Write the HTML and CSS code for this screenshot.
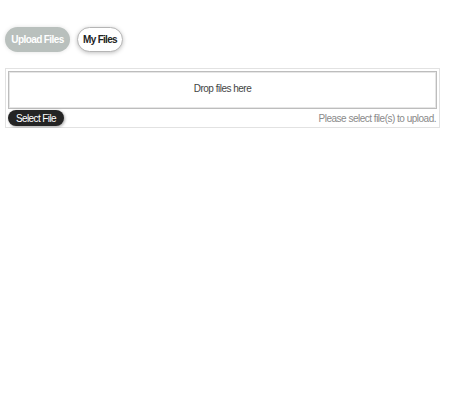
FILE: index.html
```html
<!DOCTYPE html>
<html>
<head>
<meta charset="utf-8">
<link rel="stylesheet" href="styles.css">
</head>
<body>
<div class="page">
  <div class="tabs">
    <button class="tab tab-active">Upload Files</button>
    <button class="tab tab-plain">My Files</button>
  </div>
  <div class="uploader">
    <div class="dropzone">Drop files here</div>
    <div class="footer">
      <button class="select-btn">Select File</button>
      <span class="status">Please select file(s) to upload.</span>
    </div>
  </div>
</div>
</body>
</html>
```
FILE: styles.css
```css
html, body {
  margin: 0;
  padding: 0;
  background: #ffffff;
  font-family: "Liberation Sans", Arial, sans-serif;
  font-variant-ligatures: none;
}
.page {
  padding: 27px 0 0 5px;
  width: 435px;
}
.tabs {
  display: flex;
  gap: 7px;
  height: 25px;
}
.tab {
  font-family: "Liberation Sans", Arial, sans-serif;
  font-variant-ligatures: none;
  font-size: 10px;
  font-weight: bold;
  letter-spacing: -0.6px;
  height: 25px;
  border-radius: 13px;
  padding: 0;
  margin: 0;
  box-sizing: border-box;
  cursor: pointer;
}
.tab-active {
  width: 65px;
  background: #b9c0bd;
  color: #ffffff;
  border: none;
  box-shadow: 0 0 4px rgba(0,0,0,0.12);
}
.tab-plain {
  width: 46px;
  background: #ffffff;
  color: #222222;
  letter-spacing: -0.7px;
  border: 1px solid #b5b5b5;
  box-shadow: 0 1px 4px rgba(0,0,0,0.25);
}
.uploader {
  margin-top: 16px;
  border: 1px solid #e2e2e2;
  padding: 2px 2px 1px 2px;
  box-sizing: border-box;
  width: 435px;
}
.dropzone {
  height: 38px;
  box-sizing: border-box;
  border: 1px solid #bdbdbd;
  box-shadow: inset 0 0 0 1px #e6e6e6;
  display: flex;
  align-items: center;
  justify-content: center;
  padding-bottom: 3px;
  font-size: 10px;
  letter-spacing: -0.5px;
  color: #444444;
}
.footer {
  display: flex;
  justify-content: space-between;
  align-items: center;
  margin-top: 1px;
  height: 16px;
}
.select-btn {
  font-family: "Liberation Sans", Arial, sans-serif;
  font-variant-ligatures: none;
  width: 56px;
  height: 16px;
  padding: 0;
  margin: 0;
  border: none;
  border-radius: 8px;
  background: #242424;
  color: #ffffff;
  font-size: 10px;
  letter-spacing: -0.6px;
  box-shadow: 1px 1px 3px rgba(0,0,0,0.35);
}
.status {
  font-size: 10px;
  letter-spacing: -0.5px;
  color: #8a8a8a;
  padding-right: 1px;
}
```
